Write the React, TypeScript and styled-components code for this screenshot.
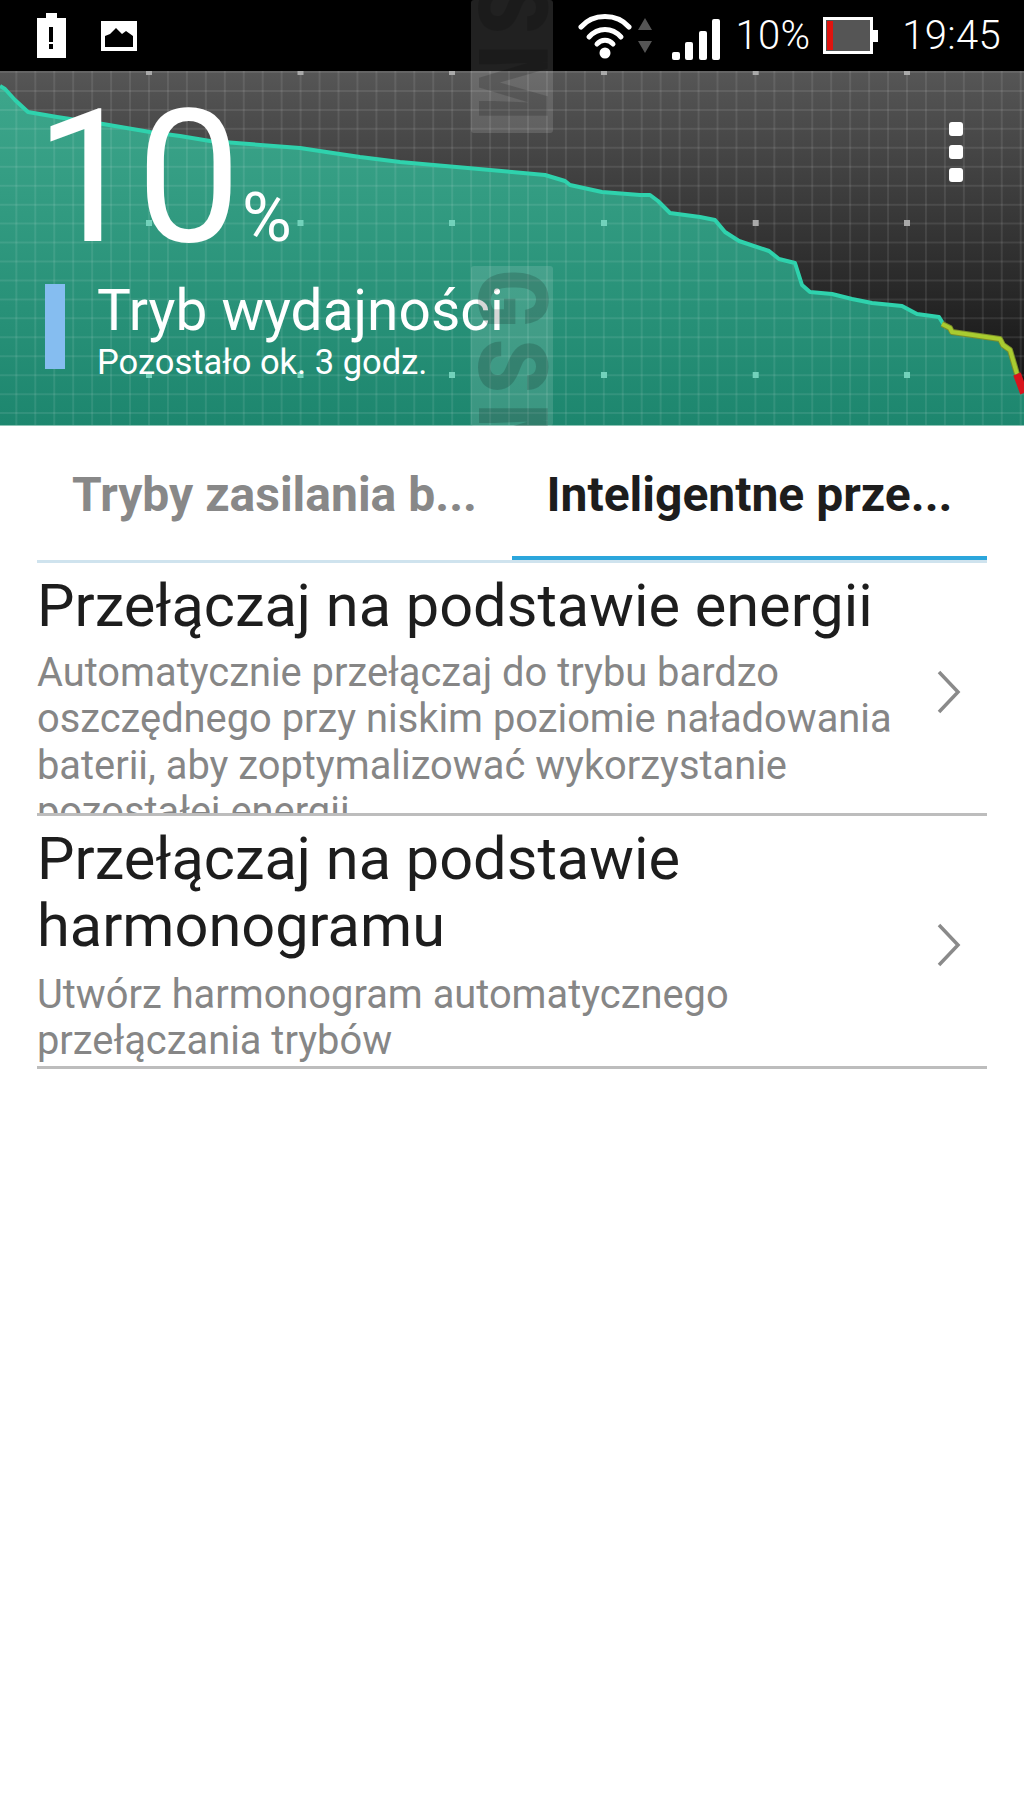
import React from "react";
import styled, { createGlobalStyle } from "styled-components";

const Global = createGlobalStyle`
  html, body { margin: 0; padding: 0; background: #fff; }
  * { box-sizing: border-box; }
  body { font-family: Roboto, "Liberation Sans", sans-serif; }
`;

const Page = styled.div`
  position: relative;
  width: 1024px;
  height: 1820px;
  overflow: hidden;
  background: #fff;
`;

const StatusBar = styled.div`
  height: 71px;
  background: #000;
  display: flex;
  align-items: flex-start;
  padding: 0 23px 0 37px;
  color: #fff;
`;

const LeftIcons = styled.div`
  display: flex;
  align-items: flex-start;
  gap: 35px;
  flex: 1;
  padding-top: 13px;
`;

const RightIcons = styled.div`
  display: flex;
  align-items: flex-start;
`;

const StatusSvg = styled.svg<{ $ml?: number; $mt?: number }>`
  display: block;
  flex: none;
  margin-left: ${(p) => p.$ml ?? 0}px;
  margin-top: ${(p) => p.$mt ?? 0}px;
`;

const StatusText = styled.span<{ $ml: number }>`
  font-size: 40px;
  font-weight: 300;
  line-height: 71px;
  margin-left: ${(p) => p.$ml}px;
  letter-spacing: 0.3px;
  white-space: nowrap;
`;

const Header = styled.div`
  position: relative;
  height: 355px;
  overflow: hidden;
  color: #fff;
  display: flex;
  flex-direction: column;
  padding: 20px 61px 0 45px;
`;

const ChartSvg = styled.svg`
  position: absolute;
  left: 0;
  top: 0;
`;

const TopRow = styled.div`
  position: relative;
  display: flex;
  justify-content: space-between;
  align-items: flex-start;
  height: 193px;
`;

const BigValue = styled.div`
  display: flex;
  align-items: baseline;
  font-weight: 400;
  margin: 12px 0 0 -10px;
`;

const BigNumber = styled.span`
  font-size: 186px;
  line-height: 148px;
  letter-spacing: -3px;
`;

const Percent = styled.span`
  font-size: 68px;
  line-height: 148px;
  margin-left: 4px;
`;

const MenuDots = styled.div`
  display: flex;
  flex-direction: column;
  gap: 9px;
  margin-top: 31px;
`;

const MenuDot = styled.span`
  width: 14px;
  height: 14px;
  background: #fff;
  border-radius: 3px;
`;

const ModeRow = styled.div`
  position: relative;
  display: flex;
  align-items: flex-start;
`;

const ModeBar = styled.div`
  width: 20px;
  height: 85px;
  background: #85bdf0;
  flex: none;
`;

const ModeText = styled.div`
  margin-left: 32px;
  margin-top: -3px;
`;

const ModeTitle = styled.div`
  font-size: 56.8px;
  line-height: 60px;
`;

const ModeSub = styled.div`
  font-size: 34.5px;
  line-height: 43px;
`;

const HeaderEdge = styled.div`
  position: absolute;
  left: 0;
  right: 0;
  bottom: 0;
  height: 1px;
  background: #8cc4b5;
`;

const Mark = styled.div<{ $top: number; $height: number; $end?: boolean }>`
  position: absolute;
  left: 471px;
  top: ${(p) => p.$top}px;
  width: 82px;
  height: ${(p) => p.$height}px;
  background: rgba(255, 255, 255, 0.13);
  border-radius: 3px;
  overflow: hidden;
  display: flex;
  flex-direction: column;
  align-items: center;
  justify-content: ${(p) => (p.$end ? "flex-end" : "flex-start")};
  padding: ${(p) => (p.$end ? "0 0 2px" : "3px 0 0")};
`;

const MarkText = styled.span<{ $end?: boolean }>`
  writing-mode: vertical-rl;
  font-family: Roboto, sans-serif;
  font-weight: 900;
  font-size: 96px;
  line-height: 82px;
  letter-spacing: 12px;
  white-space: nowrap;
  color: rgba(0, 0, 0, 0.16);
  flex: none;
  transform: scaleY(0.9);
  transform-origin: ${(p) => (p.$end ? "bottom" : "top")};
`;

const Tabs = styled.div`
  margin: 0 37px;
  height: 137px;
  display: grid;
  grid-template-columns: 1fr 1fr;
  border-bottom: 3px solid #cfe3ee;
`;

const Tab = styled.div<{ $active?: boolean }>`
  position: relative;
  display: flex;
  align-items: center;
  justify-content: center;
  height: 134px;
  padding-top: 2px;
  font-size: 48px;
  font-weight: 700;
  white-space: nowrap;
  color: ${(p) => (p.$active ? "#1d1d1d" : "#888888")};
  ${(p) =>
    p.$active
      ? `&::after { content: ""; position: absolute; left: 0; right: 0; bottom: 0; height: 4px; background: #2ba6dc; }`
      : ""}
`;

const Row = styled.div`
  margin: 0 37px;
  height: 253px;
  display: flex;
  align-items: center;
  border-bottom: 3px solid #bdbdbd;
`;

const RowText = styled.div`
  flex: 1;
  height: 250px;
  overflow: hidden;
  padding-top: 10px;
`;

const RowTitle = styled.div`
  font-size: 59.5px;
  line-height: 67px;
  color: #1d1d1d;
  width: 900px;
`;

const RowDesc = styled.div<{ $gap: number }>`
  font-size: 39.85px;
  line-height: 46.3px;
  color: #868686;
  margin-top: ${(p) => p.$gap}px;
  width: 880px;
`;

const Chevron = styled.svg`
  flex: none;
  margin-right: 26px;
  margin-top: 8px;
`;

const W = 1024;
const H = 355;
const Y0 = 71;
const pts = (a: number[][]) => a.map(([x, y]) => `${x},${y - Y0}`).join(" ");

const green = [
  [0, 86], [5, 89], [15, 100], [28, 112], [57, 117], [103, 124], [150, 132], [180, 136], [210, 141],
  [300, 148], [333, 153], [360, 157], [400, 162], [512, 172], [545, 175], [565, 181], [570, 185], [602, 192],
  [640, 195], [650, 195], [658, 201], [665, 208], [670, 213], [700, 217], [715, 220], [725, 232], [739, 241],
  [769, 251], [779, 259], [795, 263], [802, 285], [810, 292], [832, 294], [852, 299], [872, 303], [902, 306],
  [917, 314], [939, 317], [944, 325],
];
const yellow = [
  [942, 324], [950, 328], [952, 332], [1000, 339], [1003, 345], [1010, 350], [1017, 374],
];
const red = [
  [1017, 374], [1024, 393],
];

const vLines = Array.from({ length: 56 }, (_, i) => -2.6 + i * 18.95);
const hLines = Array.from({ length: 19 }, (_, i) => 1 + i * 18.95);
const nodeX = [149, 300.5, 452, 604, 755.7, 907];
const nodeY = [2, 152, 304];

const BatteryChart = () => (
  <ChartSvg width={W} height={H} viewBox={`0 0 ${W} ${H}`}>
    <defs>
      <linearGradient id="bg" x1="0" y1="0" x2="0" y2="1">
        <stop offset="0" stopColor="#565656" />
        <stop offset="1" stopColor="#0c0c0c" />
      </linearGradient>
      <linearGradient id="fill" gradientUnits="userSpaceOnUse" x1="0" y1="15" x2="0" y2="355">
        <stop offset="0" stopColor="#3da68b" />
        <stop offset="1" stopColor="#1d866e" />
      </linearGradient>
    </defs>
    <rect width={W} height={H} fill="url(#bg)" />
    <polygon points={`${pts(green)} ${pts(yellow)} ${pts(red)} 1024,355 0,355`} fill="url(#fill)" />
    {vLines.map((x) => (
      <line key={x} x1={x} x2={x} y1={0} y2={H} stroke="#fff" strokeOpacity={0.09} strokeWidth={2} />
    ))}
    {hLines.map((y) => (
      <line key={y} x1={0} x2={W} y1={y} y2={y} stroke="#fff" strokeOpacity={0.09} strokeWidth={2} />
    ))}
    <polyline points={pts(green)} fill="none" stroke="#2fd2ad" strokeWidth={4} strokeLinejoin="round" />
    <polyline points={pts(yellow)} fill="none" stroke="#7d8f2a" strokeWidth={6} strokeLinejoin="round" />
    <polyline points={pts(yellow)} fill="none" stroke="#a9cc30" strokeWidth={4} strokeLinejoin="round" />
    <polyline points={pts(red)} fill="none" stroke="#d8141c" strokeWidth={8} />
    {nodeX.map((x) =>
      nodeY.map((y, i) => {
        const inFill = i === 2 || (i === 1 && x < 650);
        return (
          <rect
            key={`${x}-${y}`}
            x={x - 3}
            y={y - (i === 0 ? 2 : 3)}
            width={6}
            height={i === 0 ? 4 : 6}
            fill={inFill ? "#72d2bb" : "#a9a9a9"}
          />
        );
      })
    )}
  </ChartSvg>
);

const ChevronIcon = () => (
  <Chevron width={24} height={44} viewBox="0 0 24 44">
    <path d="M2 2l19 20L2 42" fill="none" stroke="#8a8a8a" strokeWidth={3.5} />
  </Chevron>
);

const App = () => (
  <Page>
    <Global />
    <StatusBar>
      <LeftIcons>
        <StatusSvg width={29} height={46} viewBox="0 0 29 46">
          <path d="M9 0h11v5h9v40H0V5h9z" fill="#fff" />
          <rect x={12} y={14} width={4} height={15} fill="#000" />
          <rect x={12} y={31} width={4} height={5} fill="#000" />
        </StatusSvg>
        <StatusSvg width={36} height={30} viewBox="0 0 36 30" $mt={8}>
          <rect width={36} height={30} fill="#fff" />
          <path d="M4 26V15l5-2 6-6 6 6 4-3 7 5v11z" fill="#000" />
        </StatusSvg>
      </LeftIcons>
      <RightIcons>
        <StatusSvg width={76} height={48} viewBox="0 0 76 48" $mt={11}>
          <g fill="none" stroke="#fff" strokeWidth={5} strokeLinecap="round">
            <path d="M3 16C15 2 39 2 51 16" />
            <path d="M11 26C20 16 34 16 43 26" />
            <path d="M19 33C23 28 31 28 35 33" />
          </g>
          <circle cx={27} cy={42} r={5.5} fill="#fff" />
          <path d="M60 19l7-12 7 12z M60 30h14l-7 12z" fill="#555" />
        </StatusSvg>
        <StatusSvg width={48} height={41} viewBox="0 0 48 41" $ml={18} $mt={19}>
          <g fill="#fff">
            <rect x={0} y={33} width={8} height={8} rx={2} />
            <rect x={13} y={23} width={8} height={18} rx={2} />
            <rect x={27} y={12} width={8} height={29} rx={2} />
            <rect x={40} y={0} width={8} height={41} rx={2} />
          </g>
        </StatusSvg>
        <StatusText $ml={15}>10%</StatusText>
        <StatusSvg width={55} height={37} viewBox="0 0 55 37" $ml={13} $mt={17}>
          <rect x={1.5} y={1.5} width={47} height={34} fill="#555" stroke="#fff" strokeWidth={3} />
          <rect x={4} y={4} width={6} height={29} fill="#e0140f" />
          <rect x={49} y={13} width={6} height={12} fill="#fff" />
        </StatusSvg>
        <StatusText $ml={24}>19:45</StatusText>
      </RightIcons>
    </StatusBar>
    <Header>
      <BatteryChart />
      <TopRow>
        <BigValue>
          <BigNumber>10</BigNumber>
          <Percent>%</Percent>
        </BigValue>
        <MenuDots>
          <MenuDot />
          <MenuDot />
          <MenuDot />
        </MenuDots>
      </TopRow>
      <ModeRow>
        <ModeBar />
        <ModeText>
          <ModeTitle>Tryb wydajności</ModeTitle>
          <ModeSub>Pozostało ok. 3 godz.</ModeSub>
        </ModeText>
      </ModeRow>
      <HeaderEdge />
    </Header>
    <Tabs>
      <Tab>Tryby zasilania b...</Tab>
      <Tab $active>Inteligentne prze...</Tab>
    </Tabs>
    <Row>
      <RowText>
        <RowTitle>Przełączaj na podstawie energii</RowTitle>
        <RowDesc $gap={10}>
          Automatycznie przełączaj do trybu bardzo oszczędnego przy niskim poziomie naładowania baterii, aby
          zoptymalizować wykorzystanie pozostałej energii
        </RowDesc>
      </RowText>
      <ChevronIcon />
    </Row>
    <Row>
      <RowText>
        <RowTitle>
          Przełączaj na podstawie
          <br />
          harmonogramu
        </RowTitle>
        <RowDesc $gap={12}>Utwórz harmonogram automatycznego przełączania trybów</RowDesc>
      </RowText>
      <ChevronIcon />
    </Row>
    <Mark $top={0} $height={133} $end>
      <MarkText $end>SM</MarkText>
    </Mark>
    <Mark $top={266} $height={160}>
      <MarkText>GSM</MarkText>
    </Mark>
  </Page>
);

export default App;
